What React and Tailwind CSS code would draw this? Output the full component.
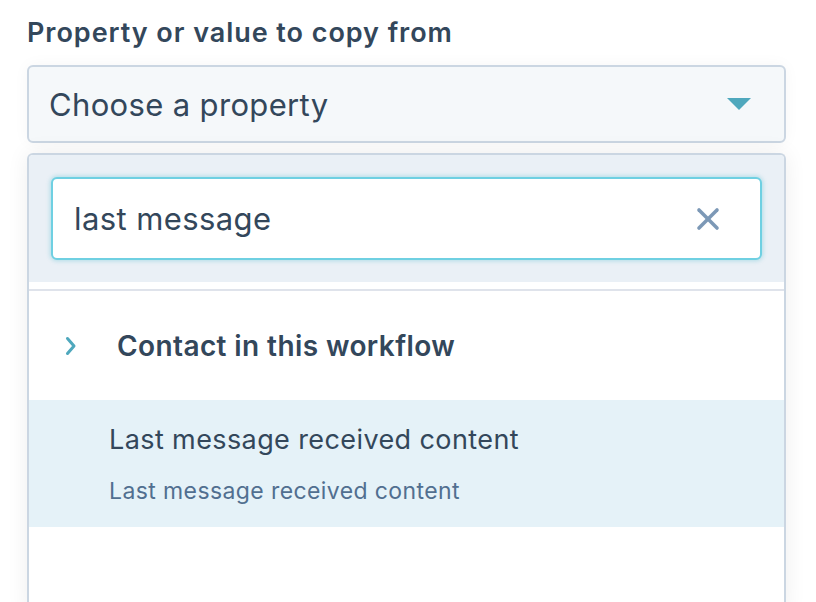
import { X } from "lucide-react";

export default function App() {
  return (
    <div className="min-h-[602px] w-[816px] overflow-hidden bg-white font-['Inter',sans-serif] text-[#33475b]">
      <div className="px-[27px] pt-[16px]">
        <label className="block text-[27px] font-semibold leading-[34px] tracking-[0.95px]">
          Property or value to copy from
        </label>

        <button className="mt-[15px] flex h-[78px] w-[759px] items-center justify-between rounded-[6px] border-2 border-[#cbd6e2] bg-[#f5f8fa] pl-[20px] pr-[32px] text-left shadow-[0_0_16px_rgba(0,0,0,0.04)]">
          <span className="text-[31px] leading-none tracking-[0.35px]">Choose a property</span>
          <svg width="24" height="12" viewBox="0 0 24 12" className="mr-[1px]">
            <path d="M0 0 L24 0 L12 12 Z" fill="#4fa8bd" />
          </svg>
        </button>

        <div className="mt-[10px] h-[460px] w-[759px] rounded-t-[6px] border-2 border-b-0 border-[#cbd6e2] bg-white shadow-[0_0_22px_rgba(0,0,0,0.07)]">
          <div className="rounded-t-[4px] bg-[#eaf0f6] px-[22px] pb-[22px] pt-[22px]">
            <div className="flex h-[83px] items-center justify-between rounded-[6px] border-2 border-[#6fd0e2] bg-white pl-[21px] pr-[34px] shadow-[0_0_4px_1px_rgba(0,164,189,0.25)]">
              <span className="text-[31px] leading-none tracking-[0.4px]">last message</span>
              <X size={36} strokeWidth={2.4} color="#7c98b6" />
            </div>
          </div>
          <div className="mt-[7px] border-t-2 border-[#dfe3eb]" />

          <div className="flex h-[109px] items-center pl-[36px]">
            <svg width="12" height="20" viewBox="0 0 12 20" fill="none">
              <path d="M2.5 2.5 L9 10 L2.5 17.5" stroke="#4fa8bd" strokeWidth="3" strokeLinecap="round" strokeLinejoin="round" />
            </svg>
            <span className="ml-[40px] text-[28px] font-semibold tracking-[0.4px]">Contact in this workflow</span>
          </div>

          <div className="flex h-[127px] flex-col justify-center bg-[#e5f2f8] pl-[80px]">
            <span className="text-[27px] leading-[30px] tracking-[0.4px]">Last message received content</span>
            <span className="mt-[24px] text-[23px] leading-[24px] tracking-[0.4px] text-[#516f90]">
              Last message received content
            </span>
          </div>
        </div>
      </div>
    </div>
  );
}
